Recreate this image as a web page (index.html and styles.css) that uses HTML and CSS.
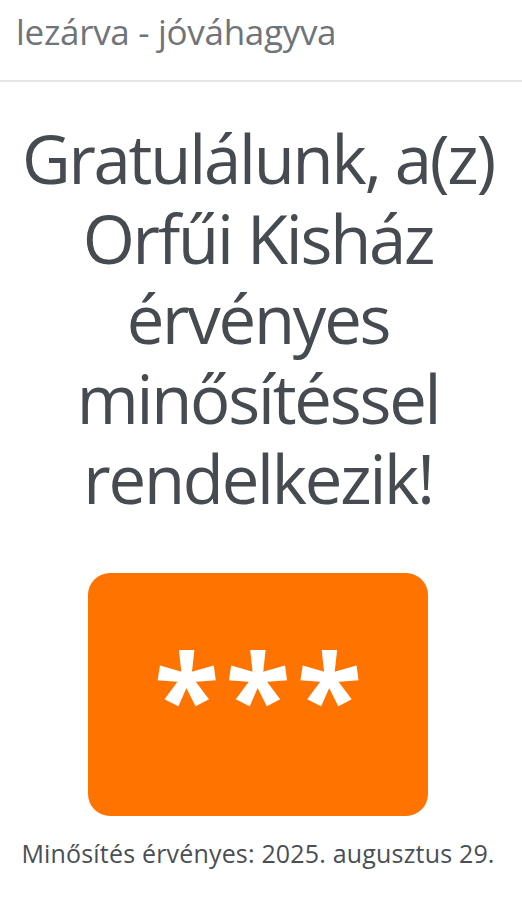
FILE: index.html
```html
<!DOCTYPE html>
<html lang="hu">
<head>
<meta charset="utf-8">
<title>Minősítés</title>
<link rel="stylesheet" href="styles.css">
</head>
<body>
<header class="status">
  <div class="status-line">lezárva - jóváhagyva</div>
</header>
<main class="result">
  <h1 class="title">Gratulálunk, a(z) Orfűi Kisház érvényes minősítéssel rendelkezik!</h1>
  <div class="badge"><span class="stars">***</span></div>
  <p class="valid">Minősítés érvényes: 2025. augusztus 29.</p>
</main>
</body>
</html>
```
FILE: styles.css
```css
html, body {
  margin: 0;
  padding: 0;
  background: #ffffff;
}
body {
  font-family: "Open Sans", "Noto Sans", "DejaVu Sans", sans-serif;
  width: 522px;
  overflow: hidden;
}
.status {
  padding: 8px 16px 0 16px;
  height: 72px;
  border-bottom: 2px solid #e6e6e6;
}
.status-line {
  font-size: 35px;
  line-height: 48px;
  letter-spacing: -0.3px;
  color: #6f7479;
  white-space: nowrap;
}
.result {
  display: flex;
  flex-direction: column;
  align-items: center;
  padding: 0 18px 0 12px;
}
.title {
  margin: 36px 0 0 0;
  font-size: 67px;
  line-height: 80px;
  letter-spacing: -2.2px;
  font-weight: 400;
  color: #464b51;
  text-align: center;
}
.badge {
  margin-top: 55px;
  width: 340px;
  height: 243px;
  background: #ff7300;
  border-radius: 22px;
  display: flex;
  align-items: center;
  justify-content: center;
}
.stars {
  font-family: "Open Sans", sans-serif;
  font-weight: 700;
  font-size: 120px;
  line-height: 1;
  color: #ffffff;
  letter-spacing: 6px;
  padding-left: 6px;
  margin-top: 2px;
}
.valid {
  margin: 20px 0 0 0;
  font-size: 25px;
  letter-spacing: 0.18px;
  color: #4a4f55;
  text-align: center;
}
```
